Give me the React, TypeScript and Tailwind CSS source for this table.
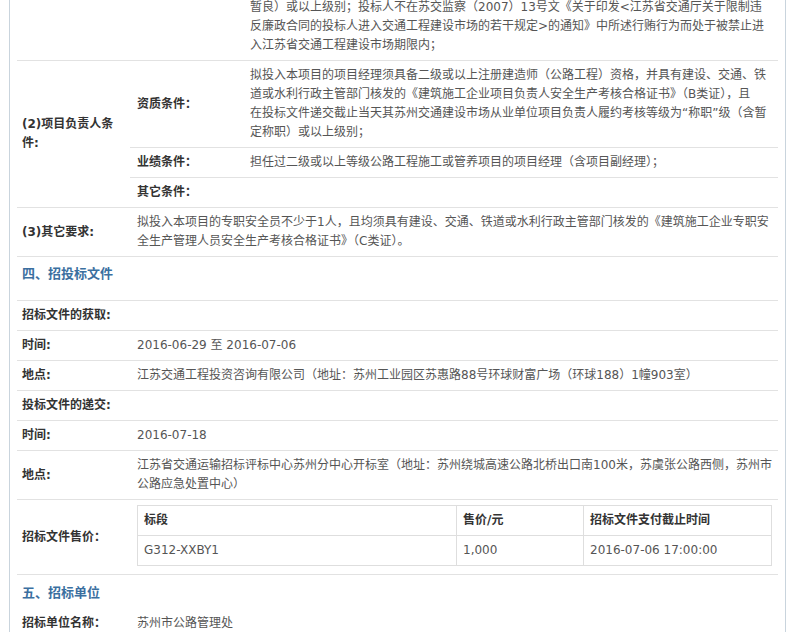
const FONT = "font-['DejaVu_Sans','Noto_Sans_CJK_SC',sans-serif]";

function Label({ children }: { children: React.ReactNode }) {
  return <span className="font-bold text-[#333]">{children}</span>;
}

export default function App() {
  const cell = "border-b border-[#e2e2e2] align-middle";
  return (
    <div className={`w-[796px] h-[632px] overflow-hidden bg-white text-[12px] leading-[19px] text-[#555] ${FONT}`}>
      <div className="ml-[9px] w-[777px] border-x border-[#c9d4dd] px-[7px] min-h-[640px]">
        <table className="w-full table-fixed -mt-[2px]">
          <colgroup>
            <col className="w-[113px]" />
            <col className="w-[113px]" />
            <col />
          </colgroup>
          <tbody>
            {/* (1) 的末尾 */}
            <tr>
              <td className={`${cell} pb-[5px]`} />
              <td className={`${cell} pb-[5px]`} />
              <td className={`${cell} pl-[7px] pr-[6px] pb-[5px]`}>
                暂良）或以上级别；投标人不在苏交监察（2007）13号文《关于印发&lt;江苏省交通厅关于限制违
                <br />
                反廉政合同的投标人进入交通工程建设市场的若干规定&gt;的通知》中所述行贿行为而处于被禁止进
                <br />
                入江苏省交通工程建设市场期限内；
              </td>
            </tr>

            {/* (2) 项目负责人条件 */}
            <tr>
              <td rowSpan={3} className={`${cell} pl-[5px] pr-[6px]`}>
                <Label>(2)项目负责人条件:</Label>
              </td>
              <td className={`${cell} pl-[7px] py-[5px]`}>
                <Label>资质条件：</Label>
              </td>
              <td className={`${cell} pl-[7px] pr-[6px] py-[5px]`}>
                拟投入本项目的项目经理须具备二级或以上注册建造师（公路工程）资格，并具有建设、交通、铁
                <br />
                道或水利行政主管部门核发的《建筑施工企业项目负责人安全生产考核合格证书》（B类证），且
                <br />
                在投标文件递交截止当天其苏州交通建设市场从业单位项目负责人履约考核等级为“称职”级（含暂
                <br />
                定称职）或以上级别；
              </td>
            </tr>
            <tr>
              <td className={`${cell} pl-[7px] py-[5px]`}>
                <Label>业绩条件：</Label>
              </td>
              <td className={`${cell} pl-[7px] pr-[6px] py-[5px]`}>
                担任过二级或以上等级公路工程施工或管养项目的项目经理（含项目副经理）；
              </td>
            </tr>
            <tr>
              <td className={`${cell} pl-[7px] py-[5px]`}>
                <Label>其它条件：</Label>
              </td>
              <td className={`${cell} py-[5px]`}>&nbsp;</td>
            </tr>

            {/* (3) 其它要求 */}
            <tr>
              <td className={`${cell} pl-[5px] py-[5px]`}>
                <Label>(3)其它要求:</Label>
              </td>
              <td colSpan={2} className={`${cell} pl-[7px] pr-[6px] py-[5px]`}>
                拟投入本项目的专职安全员不少于1人，且均须具有建设、交通、铁道或水利行政主管部门核发的《建筑施工企业专职安
                <br />
                全生产管理人员安全生产考核合格证书》（C类证）。
              </td>
            </tr>

            {/* 四、招投标文件 */}
            <tr>
              <td colSpan={3} className={`${cell} pl-[5px] pt-[7px] pb-[16px]`}>
                <span className="text-[13px] font-bold text-[#3b6f9f]">四、招投标文件</span>
              </td>
            </tr>
            <tr>
              <td colSpan={3} className={`${cell} pl-[5px] py-[5px]`}>
                <Label>招标文件的获取:</Label>
              </td>
            </tr>
            <tr>
              <td className={`${cell} pl-[5px] py-[5px]`}>
                <Label>时间:</Label>
              </td>
              <td colSpan={2} className={`${cell} pl-[7px] py-[5px]`}>
                2016-06-29 至 2016-07-06
              </td>
            </tr>
            <tr>
              <td className={`${cell} pl-[5px] py-[5px]`}>
                <Label>地点:</Label>
              </td>
              <td colSpan={2} className={`${cell} pl-[7px] pr-[6px] py-[5px]`}>
                江苏交通工程投资咨询有限公司（地址：苏州工业园区苏惠路88号环球财富广场（环球188）1幢903室）
              </td>
            </tr>
            <tr>
              <td colSpan={3} className={`${cell} pl-[5px] py-[5px]`}>
                <Label>投标文件的递交:</Label>
              </td>
            </tr>
            <tr>
              <td className={`${cell} pl-[5px] py-[5px]`}>
                <Label>时间:</Label>
              </td>
              <td colSpan={2} className={`${cell} pl-[7px] py-[5px]`}>
                2016-07-18
              </td>
            </tr>
            <tr>
              <td className={`${cell} pl-[5px] py-[5px]`}>
                <Label>地点:</Label>
              </td>
              <td colSpan={2} className={`${cell} pl-[7px] pr-[6px] py-[5px]`}>
                江苏省交通运输招标评标中心苏州分中心开标室（地址：苏州绕城高速公路北桥出口南100米，苏虞张公路西侧，苏州市
                <br />
                公路应急处置中心）
              </td>
            </tr>
            <tr>
              <td className={`${cell} pl-[5px]`}>
                <Label>招标文件售价：</Label>
              </td>
              <td colSpan={2} className={`${cell} pl-[7px] pr-[6px] pt-[5px] pb-[8px]`}>
                <table className="w-full table-fixed border border-[#dedede]">
                  <colgroup>
                    <col className="w-[319px]" />
                    <col className="w-[127px]" />
                    <col />
                  </colgroup>
                  <thead>
                    <tr className="h-[30px]">
                      <th className="border border-[#dedede] px-[6px] text-left font-bold text-[#333]">标段</th>
                      <th className="border border-[#dedede] px-[6px] text-left font-bold text-[#333]">售价/元</th>
                      <th className="border border-[#dedede] px-[6px] text-left font-bold text-[#333]">招标文件支付截止时间</th>
                    </tr>
                  </thead>
                  <tbody>
                    <tr className="h-[30px]">
                      <td className="border border-[#dedede] px-[6px]">G312-XXBY1</td>
                      <td className="border border-[#dedede] px-[6px]">1,000</td>
                      <td className="border border-[#dedede] px-[6px]">2016-07-06 17:00:00</td>
                    </tr>
                  </tbody>
                </table>
              </td>
            </tr>

            {/* 五、招标单位 */}
            <tr>
              <td colSpan={3} className="pl-[5px] pt-[8px] pb-[6px]">
                <span className="text-[13px] font-bold text-[#3b6f9f]">五、招标单位</span>
              </td>
            </tr>
            <tr>
              <td className={`${cell} pl-[5px] py-[5px]`}>
                <Label>招标单位名称：</Label>
              </td>
              <td colSpan={2} className={`${cell} pl-[7px] py-[5px]`}>
                苏州市公路管理处
              </td>
            </tr>
          </tbody>
        </table>
      </div>
    </div>
  );
}
